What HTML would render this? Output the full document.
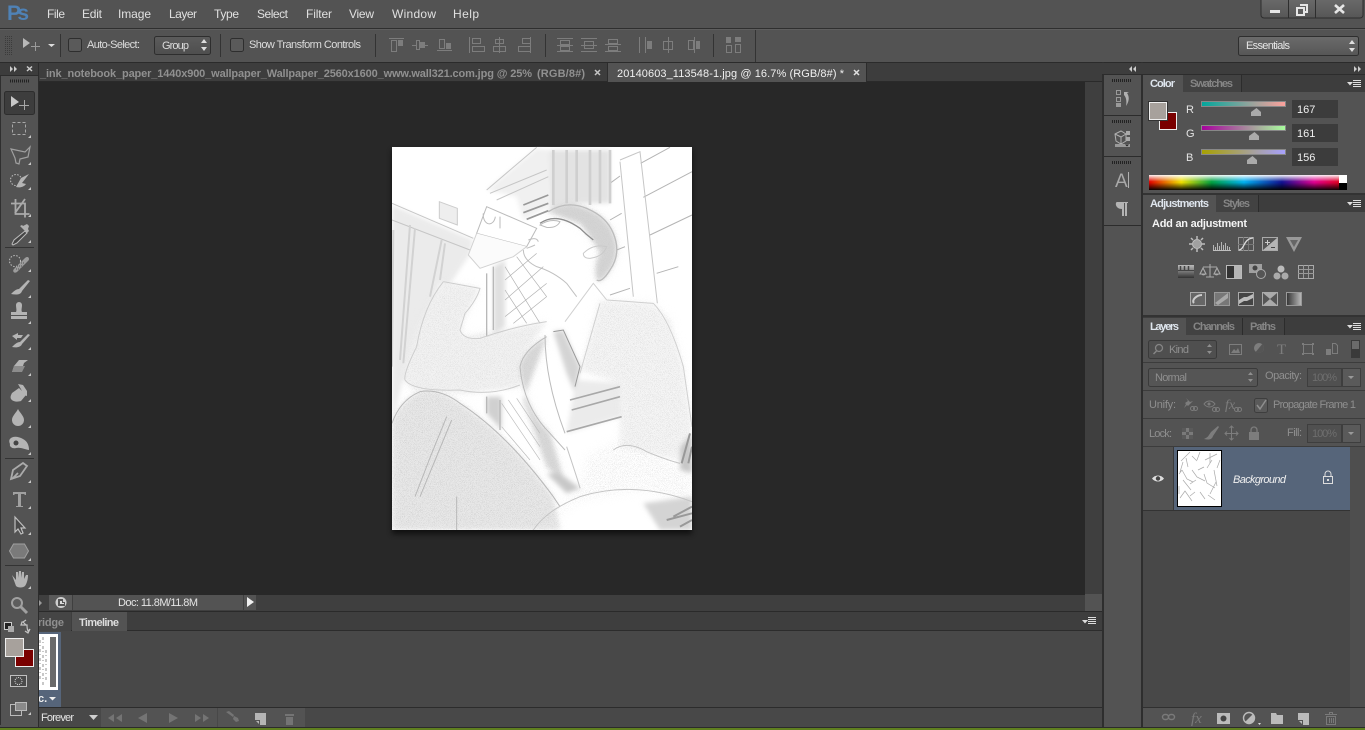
<!DOCTYPE html>
<html><head><meta charset="utf-8"><title>Photoshop</title>
<style>
html,body{margin:0;padding:0;background:#535353;overflow:hidden}
svg{display:block;position:absolute;left:0;top:0}
text{font-family:"Liberation Sans",sans-serif;font-size:11px;fill:#dcdcdc}
.m{font-size:12px;fill:#e0e0e0}
.d{fill:#8f8f8f}
.o{fill:none;stroke:#7d7d7d;stroke-width:1}
.of{fill:#7d7d7d}
.l{fill:#b4b4b4}
</style></head><body>
<svg width="1365" height="730" viewBox="0 0 1365 730" xmlns="http://www.w3.org/2000/svg">
<defs>
<linearGradient id="bt" x1="0" y1="0" x2="0" y2="1"><stop offset="0" stop-color="#6b6b6b"/><stop offset="1" stop-color="#565656"/></linearGradient>
<linearGradient id="dd" x1="0" y1="0" x2="0" y2="1"><stop offset="0" stop-color="#5c5c5c"/><stop offset="1" stop-color="#4e4e4e"/></linearGradient>
<linearGradient id="r" x1="0" x2="1" y1="0" y2="0"><stop offset="0" stop-color="#00a79c"/><stop offset="1" stop-color="#ffa19c"/></linearGradient>
<linearGradient id="g" x1="0" x2="1" y1="0" y2="0"><stop offset="0" stop-color="#a7009c"/><stop offset="1" stop-color="#a7ff9c"/></linearGradient>
<linearGradient id="b" x1="0" x2="1" y1="0" y2="0"><stop offset="0" stop-color="#a7a100"/><stop offset="1" stop-color="#a7a1ff"/></linearGradient>
<linearGradient id="rb" x1="0" x2="1" y1="0" y2="0"><stop offset="0" stop-color="#e00000"/><stop offset=".17" stop-color="#f0e000"/><stop offset=".33" stop-color="#00a040"/><stop offset=".5" stop-color="#00b0f0"/><stop offset=".7" stop-color="#101090"/><stop offset=".87" stop-color="#e00090"/><stop offset="1" stop-color="#e00020"/></linearGradient>
<linearGradient id="wb" x1="0" x2="0" y1="0" y2="1"><stop offset="0" stop-color="#fff" stop-opacity=".95"/><stop offset=".45" stop-color="#fff" stop-opacity="0"/><stop offset=".5" stop-color="#000" stop-opacity="0"/><stop offset="1" stop-color="#000" stop-opacity=".95"/></linearGradient>
<linearGradient id="gr" x1="0" x2="1" y1="0" y2="0"><stop offset="0" stop-color="#333"/><stop offset="1" stop-color="#bbb"/></linearGradient>
<linearGradient id="grv" x1="0" x2="0" y1="0" y2="1"><stop offset="0" stop-color="#bbb"/><stop offset="1" stop-color="#333"/></linearGradient>
<filter id="shadow" x="-10%" y="-10%" width="120%" height="120%"><feGaussianBlur stdDeviation="3"/></filter>
<filter id="bl" x="-5%" y="-5%" width="110%" height="110%"><feGaussianBlur stdDeviation="7"/></filter>
<filter id="bs" x="-5%" y="-5%" width="110%" height="110%"><feGaussianBlur stdDeviation="1"/></filter>
<filter id="grain" x="-2%" y="-2%" width="104%" height="104%"><feTurbulence type="fractalNoise" baseFrequency=".5" numOctaves="2" seed="4" result="n"/><feColorMatrix in="n" type="matrix" values="0 0 0 0 .6  0 0 0 0 .6  0 0 0 0 .6  3 3 0 0 -3"/><feGaussianBlur stdDeviation=".5" result="ng"/><feGaussianBlur in="SourceAlpha" stdDeviation="14" result="a"/><feComposite in="ng" in2="a" operator="in"/></filter>
<clipPath id="pc"><rect x="36" y="20" width="900" height="1150"/></clipPath>
</defs>

<!-- base -->
<rect width="1365" height="730" fill="#535353"/>
<rect y="28" width="1365" height="1" fill="#2f2f2f"/>
<rect y="29" width="1365" height="1" fill="#5e5e5e"/>
<rect y="62" width="1365" height="1" fill="#2b2b2b"/>

<!-- Menu -->
<text x="7" y="20" style="font-size:21px;font-weight:bold;fill:#4f82b6" textLength="22">Ps</text>
<text class="m" x="47" y="18" textLength="18">File</text>
<text class="m" x="82" y="18" textLength="20">Edit</text>
<text class="m" x="118" y="18" textLength="33">Image</text>
<text class="m" x="169" y="18" textLength="28">Layer</text>
<text class="m" x="214" y="18" textLength="25">Type</text>
<text class="m" x="257" y="18" textLength="31">Select</text>
<text class="m" x="306" y="18" textLength="26">Filter</text>
<text class="m" x="349" y="18" textLength="25">View</text>
<text class="m" x="392" y="18" textLength="44">Window</text>
<text class="m" x="453" y="18" textLength="26">Help</text>
<!-- window buttons -->
<path d="M1261 -2H1363V15a3 3 0 0 1-3 3H1264a3 3 0 0 1-3-3Z" fill="url(#bt)" stroke="#2e2e2e"/>
<path d="M1288.500 0V18M1315.500 0V18" stroke="#2e2e2e"/>
<rect x="1270" y="10" width="10" height="3" fill="#e6e6e6"/>
<path d="M1297 8h7v7h-7zM1300 5h7v7h-3" fill="none" stroke="#e6e6e6" stroke-width="2"/>
<path d="M1335 5l9 8M1344 5l-9 8" stroke="#e6e6e6" stroke-width="2.600"/>

<!-- Options bar -->
<path d="M5 36.500h7M5 38.500h7M5 40.500h7M5 42.500h7M5 44.500h7M5 46.500h7M5 48.500h7M5 50.500h7M5 52.500h7M5 54.500h7" stroke="#3b3b3b" stroke-dasharray="1 1"/>
<path d="M23 38v10l7-5z" fill="#b8b8b8"/><path d="M35.500 42v9M31 46.500h9" stroke="#9a9a9a"/>
<path d="M48 44h7l-3.500 3z" fill="#ddd"/>
<rect x="60" y="34" width="1" height="23" fill="#333"/>
<rect x="68.500" y="38.500" width="13" height="13" rx="2" fill="#5a5a5a" stroke="#2e2e2e"/>
<text x="87" y="48" textLength="53">Auto-Select:</text>
<rect x="154.500" y="36.500" width="56" height="18" rx="2" fill="url(#dd)" stroke="#2e2e2e"/>
<text x="162" y="49" textLength="27">Group</text>
<path d="M201 43l3-4 3 4zM201 47l3 4 3-4z" fill="#ddd"/>
<rect x="220" y="34" width="1" height="23" fill="#333"/>
<rect x="230.500" y="38.500" width="13" height="13" rx="2" fill="#5a5a5a" stroke="#2e2e2e"/>
<text x="249" y="48" textLength="112">Show Transform Controls</text>
<rect x="375" y="34" width="1" height="23" fill="#333"/>
<g class="o">
<path d="M389 38.500h15M391.500 40.500h5v11h-5z"/><rect x="398" y="40" width="5" height="6" class="of" stroke="none"/>
<path d="M412 45.500h4M424 45.500h4M416.500 40.500h3v9h-3z"/><rect x="420" y="42" width="5" height="6" class="of" stroke="none"/>
<path d="M437 50.500h15M439.500 39.500h5v9h-5z"/><rect x="446" y="43" width="5" height="6" class="of" stroke="none"/>
<path d="M469.500 37v16M472.500 38.500h8v5h-8zM472.500 46.500h12v5h-12z"/>
<path d="M499.500 37v16M495.500 39.500h8v4h-8zM493.500 46.500h12v5h-12z"/>
<path d="M530.500 37v16M522.500 38.500h8v5h-8zM518.500 46.500h12v5h-12z"/>
<rect x="545" y="34" width="1" height="23" fill="#333" stroke="none"/>
<path d="M557 38.500h16M557 45.500h16M557 51.500h16M560.500 40.500h9v4h-9zM560.500 46.500h9v4h-9z"/>
<path d="M581 45.500h16M581 38.500h16M581 51.500h16M584.500 41.500h9v7h-9z"/>
<path d="M605 51.500h16M605 44.500h16M608.500 46.500h9v4h-9zM608.500 39.500h9v4h-9z"/>
<path d="M639.500 37v16M645.500 37v16"/><rect x="647" y="41" width="5" height="8" class="of" stroke="none"/>
<path d="M668.500 37v16M663.500 41.500h9v8h-9z"/>
<path d="M694.500 37v16M688.500 40.500h5v9h-5z"/><rect x="696" y="41" width="4" height="8" class="of" stroke="none"/>
<rect x="713" y="34" width="1" height="23" fill="#333" stroke="none"/>
<rect x="726" y="37" width="5" height="6" class="of" stroke="none"/><path d="M726.500 45.500h5v7h-5z"/><rect x="735" y="37" width="6" height="5" class="of" stroke="none"/><path d="M735.500 44.500h5v8h-5z"/>
</g>
<rect x="755" y="30" width="1" height="32" fill="#333"/>
<!-- workspace -->
<rect x="1238.500" y="36.500" width="120" height="19" rx="2" fill="url(#bt)" stroke="#2e2e2e"/>
<text x="1246" y="49" textLength="44" style="fill:#e6e6e6">Essentials</text>
<path d="M1349 44l3-4 3 4zM1349 48l3 4 3-4z" fill="#e0e0e0"/>

<!-- Document area -->
<rect x="38" y="63" width="1064" height="19" fill="#3d3d3d"/>
<rect x="38" y="82" width="1047" height="513" fill="#282828"/>
<rect x="1085" y="82" width="17" height="513" fill="#3f3f3f"/>
<rect x="38" y="595" width="1047" height="16" fill="#3f3f3f"/>
<rect x="1085" y="594" width="17" height="17" fill="#535353"/>
<rect x="38" y="81" width="1064" height="1" fill="#2a2a2a"/>
<text x="40" y="77" style="font-weight:bold;fill:#909090" textLength="492">_ink_notebook_paper_1440x900_wallpaper_Wallpaper_2560x1600_www.wall321.com.jpg @ 25%</text>
<text x="537" y="77" style="font-weight:bold;fill:#909090" textLength="48">(RGB/8#)</text>
<path d="M595 70l5 5M600 70l-5 5" stroke="#c4c4c4" stroke-width="1.500"/>
<rect x="608" y="63" width="258" height="19" fill="#535353"/>
<rect x="607" y="63" width="1" height="19" fill="#2c2c2c"/>
<rect x="866" y="63" width="1" height="19" fill="#2c2c2c"/>
<text x="617" y="77" style="fill:#f0f0f0" textLength="227">20140603_113548-1.jpg @ 16.7% (RGB/8#) *</text>
<path d="M854 70l5 5M859 70l-5 5" stroke="#e0e0e0" stroke-width="1.500"/>

<!-- Image -->
<rect x="392" y="150" width="300" height="384" fill="#000" opacity=".6" filter="url(#shadow)"/>
<rect x="392" y="147" width="300" height="383" fill="#fff"/>
<g clip-path="url(#pc)" transform="translate(380 140) scale(.33333)">
 <g filter="url(#bl)">
  <path d="M36 195L280 300 268 345 215 425 178 430 120 550 70 715 36 850Z" fill="#ebebeb"/>
  <path d="M70 720Q80 640 120 550T190 425L300 445 250 540 245 590 400 565 500 545 425 650 420 740 260 760 100 750Z" fill="#f2f2f2"/>
  <path d="M36 850Q60 780 120 755 180 745 240 790 380 880 520 1070L540 1170H36Z" fill="#e8e8e8"/>
  <path d="M500 590Q430 630 420 680 430 800 510 880L555 1030 500 980 430 780Z" fill="#d8d8d8"/>
  <path d="M520 575L550 570 600 680 585 760 560 700Z" fill="#d4d4d4"/>
  <path d="M590 720L720 730 720 830 560 880 575 790Z" fill="#ebebeb"/>
  <path d="M600 690L660 480 820 490 870 540 910 680 936 860 900 960 720 920 720 730Z" fill="#f5f5f5"/>
  <path d="M500 215Q560 180 620 205 680 230 700 280 725 340 690 390 665 430 650 420 640 370 660 340 640 300 600 250 550 225Z" fill="#d4d4d4"/>
  <path d="M510 30H690V190H600L510 205Z" fill="#e3e3e3"/>
  <path d="M340 380L375 360V560L340 580Z" fill="#e0e0e0"/>
  <path d="M320 770H365V870L320 820Z" fill="#d0d0d0"/>
  <path d="M900 920L936 880V1000L900 990Z" fill="#c8c8c8"/>
  <path d="M790 1090L936 1070V1170H840Z" fill="#d4d4d4"/>
  <path d="M540 1000L600 1045 560 1060 500 1000Z" fill="#c8c8c8"/>
  <path d="M320 150L470 25 510 30 505 200 430 240 410 170Z" fill="#f0f0f0"/>
 </g>
 <g filter="url(#grain)">
  <path d="M36 850Q60 780 120 755 180 745 240 790 380 880 520 1070L540 1170H36Z" fill="#000"/>
  <path d="M500 590Q430 630 420 680 430 800 510 880L555 1030 500 980 430 780Z" fill="#000"/>
  <path d="M70 720Q80 640 120 550T190 425L300 445 250 540 245 590 400 565 500 545 425 650 420 740 260 760 100 750Z" fill="#000" fill-opacity=".6"/>
  <path d="M600 690L660 480 820 490 870 540 910 680 936 860 900 960 720 920 720 730Z" fill="#000" fill-opacity=".65"/>
  <path d="M540 1100L600 1040 620 950 720 900 860 960 936 1000V1090L780 1050 600 1080 460 1170H530Z" fill="#000" fill-opacity=".6"/>
  <path d="M500 215Q560 180 620 205 680 230 700 280 725 340 690 390 665 430 650 420 640 370 660 340 640 300 600 250 550 225Z" fill="#000"/>
 </g>
 <g fill="none" stroke="#c6c6c6" stroke-width="3" filter="url(#bs)">
  <path d="M36 190L280 295M36 240L270 330M320 150L470 22M330 160L500 90M350 180L505 110"/>
  <path d="M90 255L60 660M105 265L70 670M185 300L150 470M40 270L36 680M195 310L180 420" stroke="#d2d2d2" stroke-width="6"/>
  <path d="M782 70L870 22M790 172L936 95M810 285L936 225M830 400L895 380M690 130L720 108M690 240L725 220M710 330L735 320M690 465L750 445" stroke="#b4b4b4"/>
  <path d="M720 60L780 35 832 490M720 65L760 470"/>
  <path d="M520 30V195M560 30V190M590 30V185M630 30V195M660 30V190M690 30V190" stroke-width="8" stroke="#cfcfcf"/>
  <path d="M430 195L505 165M430 218L505 190M440 238L505 212" stroke="#999" stroke-width="5"/>
  <path d="M178 185L232 205V255L178 235Z" stroke="#ccc" fill="#eee" stroke-width="3"/>
  <path d="M480 250Q530 215 600 265 620 285 640 300" stroke="#8c8c8c" stroke-width="4"/>
  <path d="M480 255Q510 235 540 245 530 265 500 262Z" stroke="#bbb"/>
  <path d="M430 330Q430 360 470 380 520 395 560 430L590 470M445 300Q470 290 475 305M440 325Q455 320 465 315" stroke="#c0c0c0"/>
  <path d="M610 340Q640 310 680 320 670 350 630 355 610 355 610 340Z" stroke="#cacaca"/>
  <path d="M505 215Q560 180 620 205 680 230 700 280 725 340 690 390 665 430 650 420" stroke="#bcbcbc" stroke-width="4"/>
  <path d="M320 200L470 265 440 320 290 280ZM310 220a18 26 0 1 0 36 10M360 230v35" stroke="#bbb"/>
  <path d="M290 280L265 345 300 385 400 350 440 320" stroke="#d2d2d2" fill="#fbfbfb"/>
  <path d="M375 420L470 340M375 480L490 380M375 530L500 430M400 550L500 470M410 350L500 470M375 380L480 550M375 450L440 550" stroke="#b0b0b0" stroke-width="2"/>
  <path d="M365 790L480 960M385 780L480 920M410 775L480 880M365 860L450 960" stroke="#bcbcbc" stroke-width="2"/>
  <path d="M340 380V570M320 400V590M320 770V820M360 780V870" stroke="#b8b8b8" stroke-width="4"/>
  <path d="M190 425L300 445Q290 480 255 520L240 570Q250 600 300 595 400 560 500 545M190 425Q130 500 110 620 70 700 75 720 100 755 240 750 330 770 420 735" stroke="#cdcdcd"/>
  <path d="M500 590Q430 630 420 680 430 800 510 880L555 930M495 585Q495 720 555 880" stroke="#bbb"/>
  <path d="M520 575L550 570 600 680 585 740" stroke="#999"/>
  <path d="M570 780L720 740M575 810L720 770M560 875L725 830" stroke="#a8a8a8" stroke-width="5"/>
  <path d="M555 545L640 430 680 480M680 480L820 490Q870 540 910 680L936 860M600 700L660 490" stroke="#d0d0d0"/>
  <path d="M200 830Q150 950 105 1070M215 840Q165 960 120 1070M230 1070V1170M36 850Q60 780 120 755 180 745 240 790 380 880 520 1070L540 1100" stroke="#b8b8b8"/>
  <path d="M560 920Q600 1040 600 1045M460 1170Q500 1110 600 1070 760 1020 936 1085M700 930Q740 900 800 935 860 960 900 970" stroke="#c4c4c4"/>
  <path d="M880 1130L936 1100M860 1140L936 1120M900 1160L936 1140M905 970L930 880M925 970L936 920" stroke="#999" stroke-width="6"/>
 </g>
</g>

<!-- Status bar -->
<path d="M39 600l3 3-3 3z" fill="#999"/>
<rect x="49" y="595" width="23" height="15" fill="#595959"/>
<circle cx="61" cy="602.500" r="5.500" fill="#cfcfcf"/><path d="M58 599h5v3h2v4h-7z" fill="#555"/><path d="M60 601h2v2h2v1h-4z" fill="#ddd"/>
<rect x="73" y="595" width="170" height="15" fill="#535353"/>
<text x="118" y="606" style="fill:#e4e4e4" textLength="80">Doc: 11.8M/11.8M</text>
<rect x="244" y="595" width="12" height="15" fill="#535353"/>
<path d="M247 597v10l7-5z" fill="#f0f0f0"/>

<!-- Timeline -->
<rect x="38" y="611" width="1064" height="1" fill="#2a2a2a"/>
<rect x="38" y="612" width="1064" height="18" fill="#3e3e3e"/>
<rect x="38" y="630" width="1064" height="1" fill="#2c2c2c"/>
<rect x="38" y="631" width="1064" height="76" fill="#484848"/>
<rect x="38" y="612" width="33" height="19" fill="#454545"/>
<text x="38" y="626" style="font-weight:bold;fill:#8f8f8f" textLength="26">ridge</text>
<rect x="72" y="612" width="55" height="19" fill="#535353"/>
<text x="79" y="626" style="font-weight:bold;fill:#dedede" textLength="40">Timeline</text>
<path d="M1082 620h6l-3 3.500z" fill="#ddd"/><path d="M1088 617.500h8M1088 619.500h8M1088 621.500h8M1088 623.500h8" stroke="#ddd"/>
<rect x="38" y="632" width="23" height="75" fill="#56657a"/>
<rect x="38" y="634" width="20" height="56" fill="#fff"/>
<rect x="50" y="637" width="6" height="50" fill="#6a6a6a"/>
<path d="M40 640v40M43 637v48M46 650v30" stroke="#c8c8c8" stroke-width="2" stroke-dasharray="3 2 1 3"/>
<text x="38" y="702" style="font-weight:bold;fill:#eee">c.</text>
<path d="M49 697h7l-3.500 3.500z" fill="#eee"/>
<rect x="38" y="707" width="1064" height="1" fill="#2c2c2c"/>
<rect x="38" y="708" width="1064" height="19" fill="#484848"/>
<rect x="101" y="708" width="116" height="19" fill="#535353"/>
<rect x="218" y="708" width="87" height="19" fill="#535353"/>
<text x="41" y="721" style="fill:#e6e6e6" textLength="33">Forever</text>
<path d="M89 715h9l-4.500 5z" fill="#cfcfcf"/>
<g fill="#747474">
<path d="M114 714v8l-6-4zM122 714v8l-6-4zM147 713v10l-9-5zM169 713l9 5-9 5zM195 714l6 4-6 4zM203 714l6 4-6 4z"/>
<path d="M226 712l3-1 5 4-1 2zM234 716l4 2 1 3-3 1-3-3z"/>
<path d="M255 713h11v12h-6v-5h-5z" fill="#b5b5b5"/><path d="M256 721l3 3v-3z" fill="#b5b5b5"/>
<path d="M285 714h9v2h-9zM286 717h7v8h-7z"/>
</g>

<!-- Left toolbar -->
<rect x="0" y="63" width="38" height="664" fill="#535353"/>
<rect x="0" y="63" width="1" height="662" fill="#2f2f2f"/>
<rect x="38" y="63" width="1" height="664" fill="#2c2c2c"/>
<rect x="0" y="63" width="38" height="12" fill="#3c3c3c"/>
<rect x="0" y="75" width="38" height="1" fill="#2c2c2c"/>
<path d="M10 66l3 3-3 3zM14 66l3 3-3 3z" fill="#ccc"/>
<path d="M27 66.500l5 4.500M32 66.500l-5 4.500" stroke="#ccc" stroke-width="1.500"/>
<path d="M10 81h19" stroke="#222" stroke-width="3" stroke-dasharray="1 1"/>
<rect x="4.500" y="91.500" width="30" height="23" rx="2" fill="#3d3d3d" stroke="#2d2d2d"/>
<path d="M11 96v11l8-5z" fill="#c8c8c8"/><path d="M24.500 100v10M19 105.500h10" stroke="#a8a8a8"/>
<rect x="12.500" y="122.500" width="13" height="12" fill="none" stroke="#a8a8a8" stroke-dasharray="3 2"/>
<path d="M11 149l14 3 5-5-2 10-8 2-1 5-3-1-1-5z" fill="none" stroke="#a0a0a0" stroke-width="1.200"/>
<circle cx="16" cy="180" r="5.500" fill="none" stroke="#c0c0c0" stroke-dasharray="1.500 1.500"/><path d="M29 174l-8 4-5 9c4 1 8 0 10-3l-4-1z" class="l"/>
<path d="M15.500 199v15h14M11 203.500h14v14M25 199l-10 14" fill="none" stroke="#aaa" stroke-width="1.800"/>
<path d="M25 231l2 2-10 10-4 2-1-1 2-4z" fill="#444" stroke="#bbb"/><path d="M23 226l4-2 2 2-1 3 1 2-2 2-7-7 2-1z" fill="#b0b0b0"/>
<circle cx="15" cy="261" r="5.500" fill="none" stroke="#c0c0c0" stroke-dasharray="1.500 1.500"/><path d="M14 269l11-11c4-3 5 2 3 3l-11 11c-3 2-5-1-3-3z" fill="#9c9c9c"/><path d="M17 266h7M19 263h6M16 269h6" stroke="#555" stroke-dasharray="1 1"/>
<path d="M28 280l-9 9c-3 0-6 3-8 5 5 1 10 1 11-3l8-10z" class="l"/>
<path d="M16 305a3 3 0 0 1 6 0c0 3-1 5 0 7h5v3H11v-3h5c1-2 0-4 0-7zM11 316h16v3H11z" class="l"/>
<path d="M28 334l-8 8c-3 0-6 3-8 5 5 1 9 0 10-3l8-9zM12 336l6-3v2h5l-2 3h-4v2z" class="l"/>
<path d="M19 360h9l-4 3-3 9H12l2-6z" class="l"/><path d="M12 372l2-6h11l-3 6z" fill="#8c8c8c"/>
<path d="M18 384l5 1 4 6v5l-3-1-2-4zM12 393l7-5 7 7-5 6c-3 1-8 1-10-2-1-2 0-4 1-6z" class="l"/>
<path d="M18 409c2 4 6 7 6 11a6 6 0 0 1-12 0c0-4 4-7 6-11z" class="l"/>
<path d="M10 439c2-3 8-3 13 0 4 2 6 6 6 11-5-1-9-3-13-2-3 1-7-1-6-4-1-2-1-4 0-5z" class="l"/><circle cx="16" cy="443" r="2.500" fill="#444"/>
<path d="M27 466l-4-3-10 7-2 9 9-3 7-10zM12 479l6-6" fill="none" stroke="#aaa" stroke-width="1.800"/>
<path d="M13 492h13v3h-1l-1-1h-3v12h2v1h-7v-1h2v-12h-3l-1 1h-1z" fill="#a0a0a0"/>
<path d="M15 517v15l3-3 3 5 2-1-2-5h4z" fill="#4a4a4a" stroke="#c0c0c0" stroke-width="1.200"/>
<path d="M12 551l4-7h11l4 7-4 7H16z" fill="#7a7a7a" stroke="#a0a0a0" transform="translate(-2.500 0)"/>
<path d="M12 575l4 5v-8h2v6l1-7h2v7l1-6h2v7l2-4h2c0 4-1 8-3 11-2 2-7 2-9 0z" class="l"/>
<circle cx="17" cy="603" r="5" fill="#5d5d5d" stroke="#a0a0a0" stroke-width="2"/><path d="M21 607l6 6" stroke="#a0a0a0" stroke-width="3"/>
<rect x="4.500" y="622.500" width="7" height="7" fill="#222" stroke="#ccc"/><rect x="8" y="626" width="6" height="6" fill="#aaa"/>
<path d="M23 622h-1l-1 3h6c0 3 0 4 1 6l2-2-2 4-3-2M26 620l-3 2 3 3" fill="none" stroke="#c4c4c4" stroke-width="1.200"/>
<rect x="15.500" y="649.500" width="18" height="17" fill="#7a0000" stroke="#eee"/>
<rect x="5.500" y="638.500" width="18" height="18" fill="#a7a19c" stroke="#eee"/>
<rect x="10.500" y="675.500" width="16" height="11" fill="#4a4a4a" stroke="#c0c0c0"/><circle cx="18.500" cy="681" r="3.500" fill="none" stroke="#ddd" stroke-dasharray="1 1"/>
<rect x="10.500" y="704.500" width="11" height="11" fill="#555" stroke="#bbb"/><rect x="15.500" y="702.500" width="11" height="8" fill="#8a8a8a" stroke="#bbb"/>
<path d="M31 135v3h-3zM31 162v3h-3zM31 187v3h-3zM31 214v3h-3zM31 240v3h-3zM31 269v3h-3zM31 295v3h-3zM31 321v3h-3zM31 347v3h-3zM31 373v3h-3zM31 399v3h-3zM31 425v3h-3zM31 452v3h-3zM31 480v3h-3zM31 506v3h-3zM31 532v3h-3zM31 558v3h-3zM31 586v3h-3zM31 712v3h-3z" fill="#c8c8c8"/>
<path d="M5 247.500h29M5 458.500h29M5 565.500h29" stroke="#333"/>

<!-- Right dock -->
<rect x="1102" y="62" width="2" height="668" fill="#2e2e2e"/>
<rect x="1141" y="62" width="2" height="668" fill="#2e2e2e"/>
<rect x="1102" y="63" width="263" height="11" fill="#3d3d3d"/>
<rect x="1102" y="74" width="263" height="1" fill="#2c2c2c"/>
<path d="M1132 66v6l-3-3zM1136 66v6l-3-3zM1354 66l3 3-3 3zM1358 66l3 3-3 3z" fill="#ccc"/>
<path d="M1112 80.500h20M1112 121.500h20M1112 162.500h20" stroke="#222" stroke-width="3" stroke-dasharray="1 1"/>
<rect x="1104" y="115" width="37" height="1" fill="#2c2c2c"/>
<rect x="1104" y="156" width="37" height="1" fill="#2c2c2c"/>
<rect x="1104" y="225" width="37" height="1" fill="#2c2c2c"/>
<path d="M1116.500 90.500h4v4h-4zM1116.500 97.500h4v4h-4z" fill="none" stroke="#9a9a9a"/><rect x="1116" y="103" width="5" height="4" fill="#9a9a9a"/>
<path d="M1124 92h5l-2 1c2 3 3 7-1 13 1-5 0-9-2-11z" fill="#b0b0b0"/>
<path d="M1115 134l6-3 5 3v7l-5 3-5-3zM1115 134l6 3 5-3M1121 137v7" fill="none" stroke="#b0b0b0"/><rect x="1126" y="131" width="4" height="4" fill="#aaa"/><rect x="1126" y="137" width="4" height="4" fill="#aaa"/>
<rect x="1115" y="144" width="15" height="3" fill="#999"/><path d="M1125 144.500h4l-2 2z" fill="#222"/>
<text x="1115" y="187" style="font-size:19px;fill:#a8a8a8">A</text><path d="M1128.500 172v16" stroke="#b0b0b0"/>
<path d="M1117 202h11v1h-1v13h-2v-13h-1v13h-2v-7c-7 0-7-7-5-7z" fill="#b4b4b4"/>

<!-- Color panel -->
<rect x="1143" y="75" width="222" height="17" fill="#3d3d3d"/>
<rect x="1143" y="75" width="40" height="18" fill="#535353"/>
<rect x="1183" y="75" width="58" height="17" fill="#424242"/>
<rect x="1241" y="75" width="1" height="17" fill="#2c2c2c"/>
<text x="1150" y="87" style="font-weight:bold;fill:#dfe6ee" textLength="25">Color</text>
<text x="1190" y="87" style="font-weight:bold;fill:#858585" textLength="43">Swatches</text>
<path d="M1347 82h6l-3 3.500z" fill="#ddd"/><path d="M1353 80.500h8M1353 82.500h8M1353 84.500h8M1353 86.500h8" stroke="#ddd"/>
<rect x="1159.500" y="112.500" width="17" height="17" fill="#7a0000" stroke="#eee"/>
<rect x="1149.500" y="102.500" width="17" height="17" fill="#a7a19c" stroke="#eee"/>
<rect x="1148.500" y="101.500" width="19" height="19" fill="none" stroke="#333"/>
<text x="1186" y="113" style="fill:#e4e4e4">R</text><text x="1186" y="137" style="fill:#e4e4e4">G</text><text x="1186" y="161" style="fill:#e4e4e4">B</text>
<rect x="1201.500" y="101.500" width="84" height="5" fill="url(#r)" stroke="#888"/>
<rect x="1201.500" y="125.500" width="84" height="5" fill="url(#g)" stroke="#888"/>
<rect x="1201.500" y="149.500" width="84" height="5" fill="url(#b)" stroke="#888"/>
<path d="M1256.500 108l4.500 4v4h-10v-4z" fill="#aaa"/><path d="M1254.500 132l4.500 4v4h-10v-4z" fill="#aaa"/><path d="M1252.500 156l4.500 4v4h-10v-4z" fill="#aaa"/>
<rect x="1292" y="100" width="46" height="18" fill="#3c3c3c"/><rect x="1292" y="124" width="46" height="18" fill="#3c3c3c"/><rect x="1292" y="148" width="46" height="18" fill="#3c3c3c"/>
<text x="1297" y="113" style="fill:#f0f0f0">167</text><text x="1297" y="137" style="fill:#f0f0f0">161</text><text x="1297" y="161" style="fill:#f0f0f0">156</text>
<rect x="1149" y="175" width="190" height="15" fill="url(#rb)"/>
<rect x="1149" y="175" width="190" height="15" fill="url(#wb)"/>
<rect x="1339" y="175" width="8" height="8" fill="#fff"/><rect x="1339" y="183" width="8" height="7" fill="#000"/>
<rect x="1143" y="193" width="222" height="2" fill="#333"/>

<!-- Adjustments -->
<rect x="1143" y="195" width="222" height="17" fill="#3d3d3d"/>
<rect x="1143" y="195" width="73" height="18" fill="#535353"/>
<rect x="1216" y="195" width="42" height="17" fill="#424242"/>
<rect x="1258" y="195" width="1" height="17" fill="#2c2c2c"/>
<text x="1150" y="207" style="font-weight:bold;fill:#dfe6ee" textLength="59">Adjustments</text>
<text x="1223" y="207" style="font-weight:bold;fill:#858585" textLength="27">Styles</text>
<path d="M1347 202h6l-3 3.500z" fill="#ddd"/><path d="M1353 200.500h8M1353 202.500h8M1353 204.500h8M1353 206.500h8" stroke="#ddd"/>
<text x="1152" y="227" style="font-weight:bold;fill:#f4f4f4" textLength="95">Add an adjustment</text>
<circle cx="1197" cy="244" r="4.500" fill="#a0a0a0" stroke="#c0c0c0"/><path d="M1197 236v3M1197 249v3M1189 244h3M1202 244h3M1191 238l2 2M1201 248l2 2M1191 250l2-2M1201 240l2-2" stroke="#bdbdbd" stroke-width="1.500"/>
<path d="M1213.500 250v-5M1215.500 250v-3M1217.500 250v-7M1219.500 250v-4M1221.500 250v-8M1223.500 250v-5M1225.500 250v-7M1227.500 250v-4M1229.500 250v-3" stroke="#b5b5b5"/><rect x="1213" y="250" width="18" height="1" fill="#c0c0c0"/>
<rect x="1238.500" y="237.500" width="15" height="13" fill="none" stroke="#999"/><path d="M1238 244.500h16M1243.500 237v14M1248.500 237v14" stroke="#777"/><path d="M1239 250c6-1 4-11 14-12" stroke="#ddd" stroke-width="1.300" fill="none"/>
<rect x="1262.500" y="237.500" width="15" height="13" fill="#555" stroke="#aaa"/><path d="M1263 250l14-12v12z" fill="#b5b5b5"/><path d="M1265 242.500h5M1267.500 240v5" stroke="#ccc"/><path d="M1271 247.500h4" stroke="#444"/>
<path d="M1286 237h16l-8 15z" fill="#999"/><path d="M1290 240h8l-4 7z" fill="#666"/>
<rect x="1178" y="265" width="16" height="13" fill="url(#grv)"/><path d="M1178 270.500h16" stroke="#444"/><path d="M1180.500 266v4M1184.500 266v4M1188.500 266v4" stroke="#444" stroke-width="1.500"/>
<path d="M1210 264v13M1206 277h8M1203 267h14M1203 268l-3 6h6zM1217 268l-3 6h6z" fill="none" stroke="#aaa" stroke-width="1.100"/><path d="M1201 274a3 3 0 0 0 5 0zM1214 274a3 3 0 0 0 5 0z" fill="#aaa"/>
<rect x="1226.500" y="265.500" width="15" height="13" fill="#333" stroke="#bbb"/><rect x="1234" y="266" width="7" height="12" fill="#b5b5b5"/>
<rect x="1249" y="264" width="13" height="9" fill="#a0a0a0"/><circle cx="1261" cy="274" r="4.500" fill="#555" stroke="#aaa"/><circle cx="1255" cy="268" r="2.500" fill="#444"/>
<circle cx="1277" cy="276" r="3.500" fill="#aaa"/><circle cx="1285" cy="276" r="3.500" fill="#aaa"/><circle cx="1281" cy="269" r="3.500" fill="#bbb"/>
<rect x="1298.500" y="265.500" width="15" height="13" fill="none" stroke="#aaa"/><path d="M1298 269.500h16M1298 273.500h16M1303.500 265v13M1308.500 265v13" stroke="#999"/>
<rect x="1190.500" y="292.500" width="15" height="13" fill="#666" stroke="#aaa"/><path d="M1194 303c-3-3 3-8 8-8" stroke="#ccc" fill="none" stroke-width="2"/>
<rect x="1214.500" y="292.500" width="15" height="13" fill="#777" stroke="#999"/><path d="M1215 303l13-10v5l-10 7z" fill="#a8a8a8"/>
<rect x="1238.500" y="292.500" width="15" height="13" fill="#444" stroke="#aaa"/><path d="M1239 300l5-3h3l6-3v4l-6 3h-3l-5 3z" fill="#bbb"/>
<rect x="1262.500" y="292.500" width="15" height="13" fill="#555" stroke="#aaa"/><path d="M1263 293l7 6 7-6zM1263 305l7-6 7 6z" fill="#aaa"/>
<rect x="1286.500" y="292.500" width="15" height="13" fill="url(#gr)" stroke="#999"/>
<rect x="1143" y="315" width="222" height="2" fill="#333"/>

<!-- Layers -->
<rect x="1143" y="317" width="222" height="18" fill="#3d3d3d"/>
<rect x="1143" y="318" width="43" height="18" fill="#535353"/>
<rect x="1186" y="318" width="56" height="17" fill="#424242"/>
<rect x="1242" y="318" width="42" height="17" fill="#424242"/>
<path d="M1242.500 318v17M1284.500 318v17" stroke="#2c2c2c"/>
<text x="1150" y="330" style="font-weight:bold;fill:#dfe6ee" textLength="29">Layers</text>
<text x="1193" y="330" style="font-weight:bold;fill:#858585" textLength="42">Channels</text>
<text x="1250" y="330" style="font-weight:bold;fill:#858585" textLength="26">Paths</text>
<path d="M1347 325h6l-3 3.500z" fill="#ddd"/><path d="M1353 323.500h8M1353 325.500h8M1353 327.500h8M1353 329.500h8" stroke="#ddd"/>
<rect x="1148.500" y="340.500" width="68" height="18" rx="2" fill="#4f4f4f" stroke="#3a3a3a"/>
<circle cx="1159" cy="348" r="3.500" fill="none" stroke="#858585" stroke-width="1.300"/><path d="M1156.500 351l-3 3" stroke="#858585" stroke-width="1.500"/>
<text x="1169" y="353" class="d" textLength="20">Kind</text>
<path d="M1207 347l2.500-3 2.500 3zM1207 351l2.500 3 2.500-3z" fill="#8f8f8f"/>
<rect x="1229.500" y="344.500" width="12" height="10" fill="none" stroke="#7d7d7d"/><path d="M1231 353l3-4 2 2 2-3 2 5z" fill="#7d7d7d"/>
<circle cx="1259" cy="348" r="5" fill="#7d7d7d"/><path d="M1259 343a5 5 0 0 1 0 10z" fill="#555" transform="rotate(40 1259 348)"/>
<text x="1277" y="354" style="font-family:'Liberation Serif',serif;font-size:15px;fill:#7d7d7d">T</text>
<path d="M1303.500 344.500h9v9h-9z" fill="none" stroke="#7d7d7d"/><path d="M1302 343h2v2h-2zM1312 343h2v2h-2zM1302 353h2v2h-2zM1312 353h2v2h-2z" fill="#7d7d7d"/>
<path d="M1326 349h5v6h-5z" fill="#7d7d7d"/><path d="M1332.500 343.500h3l2 2v8h-5z" fill="none" stroke="#7d7d7d"/>
<rect x="1351" y="340" width="9" height="18" fill="#3a3a3a"/><rect x="1352" y="341" width="7" height="8" fill="#6a6a6a"/>
<rect x="1143" y="362" width="222" height="1" fill="#3c3c3c"/>
<rect x="1148.500" y="368.500" width="109" height="18" rx="2" fill="#555" stroke="#3a3a3a"/>
<text x="1155" y="381" class="d" textLength="32">Normal</text>
<path d="M1248 375l2.500-3 2.500 3zM1248 379l2.500 3 2.500-3z" fill="#8f8f8f"/>
<text x="1265" y="379" class="d" textLength="37">Opacity:</text>
<rect x="1307.500" y="368.500" width="34" height="18" fill="#505050" stroke="#3e3e3e"/>
<rect x="1342.500" y="368.500" width="18" height="18" fill="#5a5a5a" stroke="#3e3e3e"/>
<text x="1312" y="381" style="fill:#6e6e6e" textLength="25">100%</text>
<path d="M1348 376h6l-3 3z" fill="#999"/>
<rect x="1143" y="390" width="222" height="1" fill="#3c3c3c"/>
<text x="1149" y="408" class="d" textLength="27">Unify:</text>
<path d="M1186 398l4 4 3-1-5 5-1-1-3 3 2-4-1-1 3-2z" fill="#7d7d7d"/><rect x="1190.500" y="406.500" width="4" height="4" rx="2" fill="none" stroke="#7d7d7d"/><rect x="1193.500" y="406.500" width="4" height="4" rx="2" fill="none" stroke="#7d7d7d"/>
<path d="M1204 404c3-4 8-4 11 0-3 4-8 4-11 0z" fill="none" stroke="#7d7d7d"/><circle cx="1209" cy="404" r="1.500" fill="#7d7d7d"/><rect x="1212.500" y="407.500" width="4" height="4" rx="2" fill="none" stroke="#7d7d7d"/><rect x="1215.500" y="407.500" width="4" height="4" rx="2" fill="none" stroke="#7d7d7d"/>
<text x="1225" y="409" style="font-family:'Liberation Serif',serif;font-style:italic;font-size:14px;fill:#7d7d7d">fx</text><rect x="1234.500" y="407.500" width="4" height="4" rx="2" fill="none" stroke="#7d7d7d"/><rect x="1237.500" y="407.500" width="4" height="4" rx="2" fill="none" stroke="#7d7d7d"/>
<rect x="1254.500" y="398.500" width="13" height="14" rx="2" fill="#5a5a5a" stroke="#3e3e3e"/><path d="M1257 405l3 4 6-9" fill="none" stroke="#8f8f8f" stroke-width="1.500"/>
<text x="1273" y="408" class="d" textLength="83">Propagate Frame 1</text>
<rect x="1143" y="418" width="222" height="1" fill="#3c3c3c"/>
<text x="1149" y="437" class="d" textLength="23">Lock:</text>
<rect x="1182" y="428" width="11" height="11" fill="#7a7a7a"/><path d="M1182 428h4v4h-4zM1189 428h4v4h-4zM1186 432h3v3h-3zM1182 435h4v4h-4zM1189 435h4v4h-4z" fill="#5a5a5a"/>
<path d="M1218 426l-7 6-2 3c-1 2-3 3-5 4 4 1 8 1 9-3l6-9z" fill="#7d7d7d"/>
<path d="M1231.500 426v14M1225 433.500h13M1229.500 428l2-2 2 2M1229.500 438l2 2 2-2M1227 431.500l-2 2 2 2M1236 431.500l2 2-2 2" fill="none" stroke="#7d7d7d"/>
<rect x="1249" y="432" width="10" height="8" fill="#7d7d7d"/><path d="M1251 432v-2a3 3 0 0 1 6 0v2" fill="none" stroke="#7d7d7d" stroke-width="1.300"/>
<text x="1287" y="436" class="d" textLength="15">Fill:</text>
<rect x="1307.500" y="424.500" width="34" height="18" fill="#505050" stroke="#3e3e3e"/>
<rect x="1342.500" y="424.500" width="18" height="18" fill="#5a5a5a" stroke="#3e3e3e"/>
<text x="1312" y="437" style="fill:#6e6e6e" textLength="25">100%</text>
<path d="M1348 432h6l-3 3z" fill="#999"/>
<rect x="1143" y="446" width="222" height="1" fill="#3c3c3c"/>
<!-- layer row -->
<rect x="1143" y="447" width="207" height="64" fill="#535353"/>
<rect x="1174" y="447" width="176" height="63" fill="#56657a"/>
<rect x="1173" y="447" width="1" height="63" fill="#3a3a3a"/>
<rect x="1143" y="510" width="207" height="1" fill="#333"/>
<rect x="1350" y="447" width="15" height="261" fill="#4e4e4e"/>
<rect x="1143" y="511" width="207" height="196" fill="#484848"/>
<path d="M1152 478.500c3-4 9-4 12 0-3 4-9 4-12 0z" fill="#ddd"/><circle cx="1158" cy="478.500" r="2.200" fill="#444"/>
<rect x="1177.500" y="450.500" width="44" height="56" fill="#fff" stroke="#000"/>
<g fill="none" stroke="#aaa" stroke-width=".7">
<path d="M1190 452l-9 9M1200 452l-3 8M1210 453v10M1205 460l12-6M1182 470l5 9 6 3M1192 470l5 7 8 4M1180 498l5-7 7 10M1204 474l3 9 8 5M1214 470l3 16M1186 458l2 9M1196 480l-6 4M1212 460l-5 8M1183 480l8 10M1216 482l-6 12M1200 492l5 7M1179 474l3-4M1192 456l5 5M1179 486v8M1183 462l-3 10M1198 470l6-3M1208 495l7 5M1190 496l5-4M1220 460l-3 8"/>
</g>
<text x="1233" y="483" style="font-style:italic;fill:#f0f0f0" textLength="53">Background</text>
<rect x="1323.500" y="476.500" width="9" height="7" fill="none" stroke="#ddd"/><path d="M1325 476v-2a3 3 0 0 1 6 0v2" fill="none" stroke="#ddd"/><rect x="1327" y="479" width="2" height="2" fill="#ddd"/>
<!-- layers footer -->
<rect x="1143" y="707" width="222" height="1" fill="#303030"/>
<rect x="1143" y="708" width="222" height="20" fill="#535353"/>
<rect x="1162.500" y="714.500" width="6" height="5" rx="2.500" fill="none" stroke="#7a7a7a" stroke-width="1.400"/><rect x="1168.500" y="714.500" width="6" height="5" rx="2.500" fill="none" stroke="#7a7a7a" stroke-width="1.400"/>
<text x="1191" y="723" style="font-family:'Liberation Serif',serif;font-style:italic;font-size:15px;fill:#7a7a7a">fx</text>
<rect x="1217" y="713" width="13" height="11" fill="#bbb"/><circle cx="1223.500" cy="718.500" r="3" fill="#444"/>
<circle cx="1249" cy="718" r="5.500" fill="#555" stroke="#bbb" stroke-width="1.400"/><path d="M1245 722l8-8a5 5 0 0 1-8 8z" fill="#bbb"/><path d="M1258 723h3l-1.500 2z" fill="#ddd"/>
<path d="M1271 713h5l1 2h6v9h-12z" fill="#bbb"/>
<path d="M1298 713h11v12h-6v-5h-5z" fill="#bbb"/><path d="M1299 721l3 3v-3z" fill="#bbb"/>
<path d="M1325 714.500h12M1329.500 714v-1.500h3v1.500M1326.500 716.500h9v8h-9zM1329.500 718v5M1331.500 718v5M1333.500 718v5" fill="none" stroke="#7a7a7a"/>

<!-- bottom edge -->
<rect y="727" width="1365" height="1" fill="#2b2b2b"/>
<rect y="728" width="1365" height="2" fill="#5f7f1f"/>
</svg>
</body></html>
